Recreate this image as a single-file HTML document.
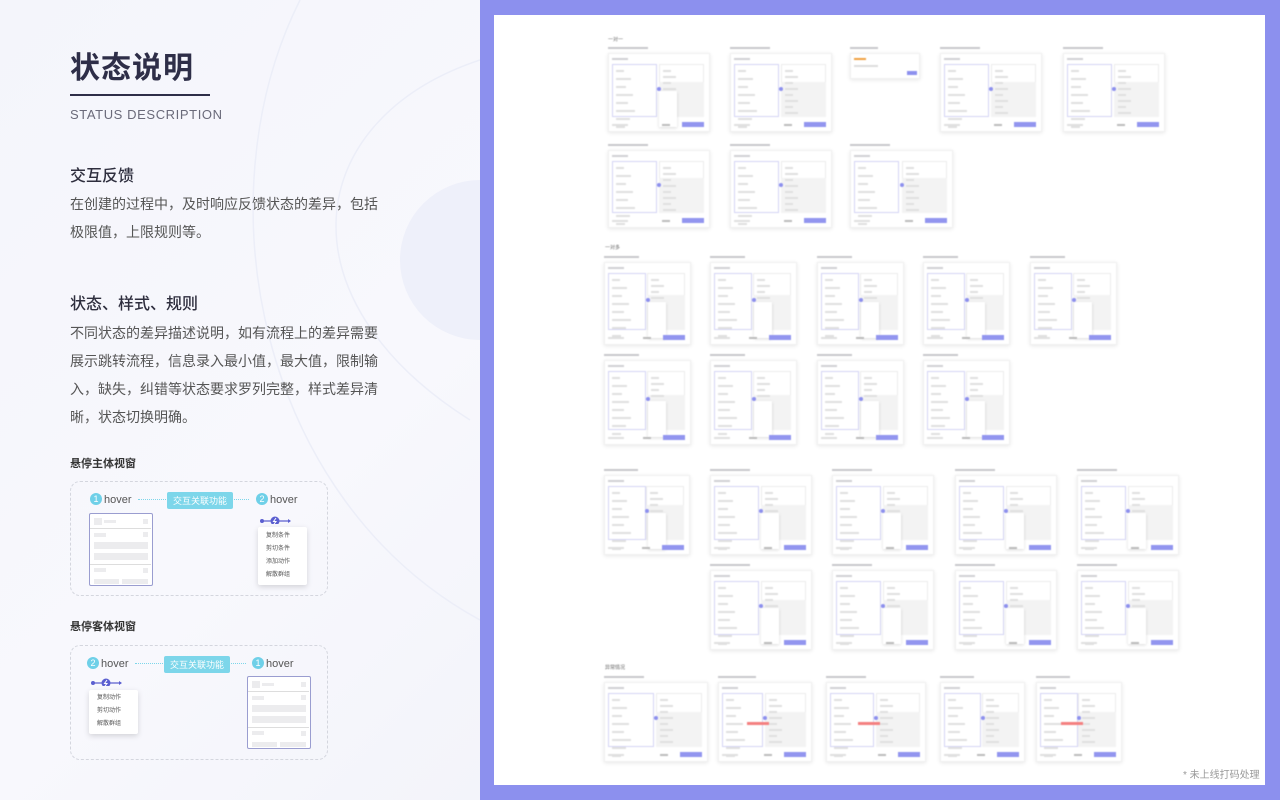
<!DOCTYPE html>
<html><head><meta charset="utf-8">
<style>
*{margin:0;padding:0;box-sizing:border-box}
body{width:1280px;height:800px;overflow:hidden;position:relative;font-family:"Liberation Sans","Noto Sans CJK SC",sans-serif;background:#f6f7fc}
.left{position:absolute;left:0;top:0;width:480px;height:800px;background:linear-gradient(135deg,#f4f5fb,#f8f8fd 60%,#f3f4fa);overflow:hidden}
.right{position:absolute;left:480px;top:0;width:800px;height:800px;background:#8c90ee}
.card{position:absolute;left:14px;top:15px;width:771px;height:770px;background:#fff}
#th{position:absolute;left:0;top:0;width:771px;height:770px;filter:blur(0.5px)}
.t{position:absolute;white-space:nowrap}
.box{position:absolute;border:1.5px dashed #d4d6de;border-radius:10px}
.num{display:inline-block;width:12px;height:12px;border-radius:50%;background:#6fd0e8;color:#fff;font-size:9px;text-align:center;line-height:12px;vertical-align:1px;margin-right:2px}
.hv{font-size:11px;color:#555}
.tag{position:absolute;background:#7dd6ea;color:#fff;font-size:9px;padding:2px 6px;border-radius:2px}
.dl{position:absolute;border-top:1.5px dotted #7dd6ea;height:0}
.mini{position:absolute;border:1.5px solid #9a9dd0;border-radius:2px;background:#fff}
.g{position:absolute;background:#ececee}
.menu{position:absolute;background:#fff;box-shadow:0 2px 6px rgba(0,0,0,.15);border-radius:2px;font-size:6px;color:#555}
.menu div{height:13px;line-height:13px;padding-left:8px}
.ic{position:absolute;height:8px}
</style></head><body>
<div class="left">
<svg width="480" height="800" style="position:absolute;left:0;top:0">
<path d="M300 0 C 200 200, 260 500, 480 620" stroke="#eceef8" stroke-width="1.5" fill="none"/>
<path d="M480 60 C 300 120, 280 300, 470 420" stroke="#eceef8" stroke-width="1.5" fill="none"/>
<circle cx="480" cy="260" r="80" fill="#eef0fa"/>
</svg>
<div class="t" style="left:70px;top:43px;font-size:30px;font-weight:bold;color:#2e2e48;letter-spacing:1px">状态说明</div>
<div style="position:absolute;left:70px;top:94px;width:140px;height:2px;background:#2e2e48"></div>
<div class="t" style="left:70px;top:107px;font-size:13px;color:#6a6a7a;letter-spacing:.6px">STATUS DESCRIPTION</div>
<div class="t" style="left:70px;top:162px;font-size:16px;color:#2e2e3e;font-weight:500">交互反馈</div>
<div style="position:absolute;left:70px;top:190px;width:320px;font-size:14px;line-height:28px;color:#555">在创建的过程中，及时响应反馈状态的差异，包括<br>极限值，上限规则等。</div>
<div class="t" style="left:70px;top:290px;font-size:16px;color:#2e2e3e;font-weight:500">状态、样式、规则</div>
<div style="position:absolute;left:70px;top:319px;width:320px;font-size:14px;line-height:28px;color:#555">不同状态的差异描述说明，如有流程上的差异需要<br>展示跳转流程，信息录入最小值，最大值，限制输<br>入，缺失，纠错等状态要求罗列完整，样式差异清<br>晰，状态切换明确。</div>
<div class="t" style="left:70px;top:455px;font-size:11px;color:#333;font-weight:bold">悬停主体视窗</div>
<div class="box" style="left:70px;top:481px;width:258px;height:115px"></div>
<div class="t hv" style="left:90px;top:493px"><span class="num">1</span>hover</div>
<div class="dl" style="left:138px;top:499px;width:28px"></div>
<div class="tag" style="left:167px;top:492px">交互关联功能</div>
<div class="dl" style="left:221px;top:499px;width:28px"></div>
<div class="t hv" style="left:256px;top:493px"><span class="num">2</span>hover</div>
<div class="mini" style="left:89px;top:513px;width:64px;height:73px">
<div class="g" style="left:4px;top:4px;width:8px;height:7px"></div><div class="g" style="left:14px;top:6px;width:12px;height:3px"></div><div class="g" style="left:53px;top:5px;width:5px;height:5px"></div>
<div class="g" style="left:0;top:14px;width:61px;height:1px;background:#ddd"></div>
<div class="g" style="left:4px;top:19px;width:12px;height:4px"></div><div class="g" style="left:53px;top:18px;width:5px;height:5px"></div>
<div class="g" style="left:4px;top:28px;width:54px;height:7px"></div><div class="g" style="left:4px;top:39px;width:54px;height:7px"></div>
<div class="g" style="left:0;top:50px;width:61px;height:1px;background:#ddd"></div>
<div class="g" style="left:4px;top:54px;width:12px;height:4px"></div><div class="g" style="left:53px;top:54px;width:5px;height:5px"></div>
<div class="g" style="left:4px;top:65px;width:25px;height:5px"></div><div class="g" style="left:32px;top:65px;width:26px;height:5px"></div>
</div>
<svg class="ic" style="left:259px;top:516px" width="34" height="10"><circle cx="3" cy="5" r="2" fill="#5b5fd0"/><line x1="3" y1="5" x2="31" y2="5" stroke="#5b5fd0" stroke-width="1.2"/><circle cx="16" cy="5" r="4.5" fill="#5b5fd0"/><path d="M17 2 L14.5 5.5 H17 L15 8" stroke="#fff" stroke-width="1" fill="none"/><path d="M29 3 L32 5 L29 7" fill="#5b5fd0"/></svg>
<div class="menu" style="left:258px;top:527px;width:49px;height:58px;padding-top:3px"><div>复制条件</div><div>剪切条件</div><div>添加动作</div><div>解散群组</div></div>

<div class="t" style="left:70px;top:618px;font-size:11px;color:#333;font-weight:bold">悬停客体视窗</div>
<div class="box" style="left:70px;top:645px;width:258px;height:115px"></div>
<div class="t hv" style="left:87px;top:657px"><span class="num">2</span>hover</div>
<div class="dl" style="left:135px;top:663px;width:28px"></div>
<div class="tag" style="left:164px;top:656px">交互关联功能</div>
<div class="dl" style="left:218px;top:663px;width:28px"></div>
<div class="t hv" style="left:252px;top:657px"><span class="num">1</span>hover</div>
<svg class="ic" style="left:90px;top:678px" width="34" height="10"><circle cx="3" cy="5" r="2" fill="#5b5fd0"/><line x1="3" y1="5" x2="31" y2="5" stroke="#5b5fd0" stroke-width="1.2"/><circle cx="16" cy="5" r="4.5" fill="#5b5fd0"/><path d="M17 2 L14.5 5.5 H17 L15 8" stroke="#fff" stroke-width="1" fill="none"/><path d="M29 3 L32 5 L29 7" fill="#5b5fd0"/></svg>
<div class="menu" style="left:89px;top:690px;width:49px;height:44px;padding-top:2px"><div>复制动作</div><div>剪切动作</div><div>解散群组</div></div>
<div class="mini" style="left:247px;top:676px;width:64px;height:73px">
<div class="g" style="left:4px;top:4px;width:8px;height:7px"></div><div class="g" style="left:14px;top:6px;width:12px;height:3px"></div><div class="g" style="left:53px;top:5px;width:5px;height:5px"></div>
<div class="g" style="left:0;top:14px;width:61px;height:1px;background:#ddd"></div>
<div class="g" style="left:4px;top:19px;width:12px;height:4px"></div><div class="g" style="left:53px;top:18px;width:5px;height:5px"></div>
<div class="g" style="left:4px;top:28px;width:54px;height:7px"></div><div class="g" style="left:4px;top:39px;width:54px;height:7px"></div>
<div class="g" style="left:0;top:50px;width:61px;height:1px;background:#ddd"></div>
<div class="g" style="left:4px;top:54px;width:12px;height:4px"></div><div class="g" style="left:53px;top:54px;width:5px;height:5px"></div>
<div class="g" style="left:4px;top:65px;width:25px;height:5px"></div><div class="g" style="left:32px;top:65px;width:26px;height:5px"></div>
</div>
</div>
<div class="right"><div class="card"><div id="th"></div>
<div class="t" style="left:689px;top:751px;font-size:10px;color:#999">* 未上线打码处理</div>
</div></div>
<script>
var c=document.getElementById('th');
function el(s){var d=document.createElement('div');d.style.cssText='position:absolute;'+s;c.appendChild(d);return d;}
[[114,36,'一对一'],[111,244,'一对多'],[111,664,'异常情况']].forEach(function(a){var d=el('left:'+a[0]+'px;top:'+(a[1]-15)+'px;font-size:5px;color:#666');d.textContent=a[2];});
function thumb(x,y,w,h,opt){
 x-=494;y-=15;
 el('left:'+x+'px;top:'+(y-6)+'px;width:'+Math.min(40,w*0.4)+'px;height:2px;background:#c8c8cc');
 el('left:'+x+'px;top:'+y+'px;width:'+w+'px;height:'+h+'px;background:#fff;box-shadow:0 1px 4px rgba(0,0,0,.1);border:1px solid #f0f0f0');
 if(opt=='d'){el('left:'+(x+4)+'px;top:'+(y+5)+'px;width:12px;height:2px;background:#f0a040');el('left:'+(x+4)+'px;top:'+(y+12)+'px;width:24px;height:2px;background:#ddd');el('left:'+(x+w-13)+'px;top:'+(y+h-8)+'px;width:10px;height:4px;background:#8d90ee');return;}
 el('left:'+(x+4)+'px;top:'+(y+5)+'px;width:16px;height:2px;background:#d0d0d4');
 var pw=Math.round(w*0.44);
 el('left:'+(x+4)+'px;top:'+(y+11)+'px;width:'+pw+'px;height:'+(h-26)+'px;border:1px solid #d4d5f4;background:#fff');
 el('left:'+(x+w-pw-6)+'px;top:'+(y+11)+'px;width:'+pw+'px;height:'+(h-26)+'px;border:1px solid #ececec;background:#fff');
 el('left:'+(x+w-pw-6)+'px;top:'+(y+h-50)+'px;width:'+pw+'px;height:35px;background:#f3f3f3');
 for(var i=0;i<8;i++){el('left:'+(x+8)+'px;top:'+(y+17+i*8)+'px;width:'+(8+(i*7)%12)+'px;height:1.5px;background:#e0e0e0');el('left:'+(x+w-pw-2)+'px;top:'+(y+17+i*6)+'px;width:'+(8+(i*5)%10)+'px;height:1.5px;background:#e0e0e0');}
 el('left:'+(x+pw+8)+'px;top:'+(y+h/2-4)+'px;width:'+(w-2*pw-16)+'px;height:1px;border-top:1px dotted #a8abf2');
 el('left:'+(x+w/2-2)+'px;top:'+(y+h/2-6)+'px;width:4px;height:4px;border-radius:50%;background:#8d90ee');
 if(opt=='m'){el('left:'+(x+pw+6)+'px;top:'+(y+h/2-2)+'px;width:18px;height:36px;background:#fff;box-shadow:0 1px 3px rgba(0,0,0,.15)');}
 if(opt=='r'){el('left:'+(x+w/2-18)+'px;top:'+(y+h-40)+'px;width:22px;height:3px;background:#f48080');}
 el('left:'+(x+4)+'px;top:'+(y+h-8)+'px;width:16px;height:1.5px;background:#e0e0e0');
 el('left:'+(x+w-48)+'px;top:'+(y+h-8)+'px;width:8px;height:2px;background:#bbb');
 el('left:'+(x+w-28)+'px;top:'+(y+h-10)+'px;width:22px;height:5px;background:#9295ef');
}
thumb(608,53,102,79,'m');thumb(730,53,102,79);thumb(850,53,70,26,'d');thumb(940,53,102,79);thumb(1063,53,102,79);
thumb(608,150,102,78);thumb(730,150,102,78);thumb(850,150,103,78);
[604,710,817,923,1030].forEach(function(x){thumb(x,262,87,83,'m')});
[604,710,817,923].forEach(function(x){thumb(x,360,87,85,'m')});
thumb(604,475,86,80,'m');[710,832,955,1077].forEach(function(x){thumb(x,475,102,80,'m')});
[710,832,955,1077].forEach(function(x){thumb(x,570,102,80,'m')});
thumb(604,682,104,80);thumb(718,682,94,80,'r');thumb(826,682,100,80,'r');thumb(940,682,85,80);thumb(1036,682,86,80,'r');
</script>
</body></html>
